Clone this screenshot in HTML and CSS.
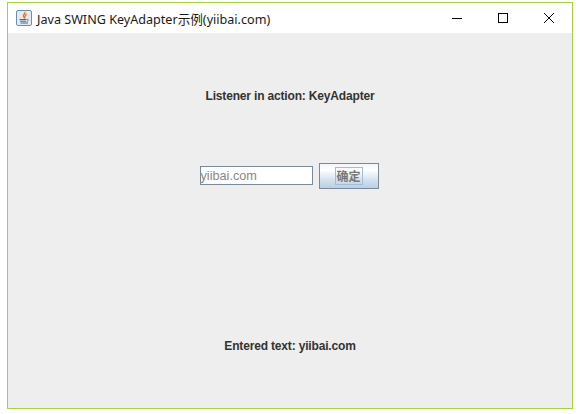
FILE: index.html
```html
<!DOCTYPE html>
<html>
  <head>
    <title>Java SWING KeyAdapter示例(yiibai.com)</title>
    <link rel="stylesheet" href="styles.css">
  </head>
  <body>
    <div class="window">
      <div class="titlebar">
        <svg class="app-icon" width="16" height="16" viewBox="0 0 16 16">
          <rect x="0.5" y="0.5" width="15" height="15" rx="1.5" fill="#e3eaf2" stroke="#6f8daa"/>
          <path d="M8.8 2c1 1.7-2 2.6-1.4 4.4.2.6.6 1 1 1.4-.3-1.3 2.4-2.1 1.5-3.9" fill="none" stroke="#e8701a" stroke-width="1.3"/>
          <path d="M3.5 9.5h7M4 11.2h6M4.5 13h7.5" stroke="#48698c" stroke-width="1"/>
          <path d="M11 9.3c1.8-.3 2 1.7-.4 2.1" fill="none" stroke="#48698c" stroke-width="0.8"/>
        </svg>
        <span class="title">Java SWING KeyAdapter示例(yiibai.com)</span>
        <div class="controls">
          <svg class="ctl" width="46" height="30" viewBox="0 0 46 30"><path d="M18 15.5h10" stroke="#000"/></svg>
          <svg class="ctl" width="46" height="30" viewBox="0 0 46 30"><rect x="18.5" y="10.5" width="9" height="9" fill="none" stroke="#000"/></svg>
          <svg class="ctl" width="46" height="30" viewBox="0 0 46 30"><path d="M18 10l10 10M28 10l-10 10" stroke="#000"/></svg>
        </div>
      </div>
      <div class="content">
        <div class="label top-label">Listener in action: KeyAdapter</div>
        <div class="form-row">
          <input class="field" type="text" value="yiibai.com">
          <button class="btn"><span class="btn-text">确定</span></button>
        </div>
        <div class="label bottom-label">Entered text: yiibai.com</div>
      </div>
    </div>
  </body>
</html>
```

FILE: styles.css
```css
html, body {
  margin: 0;
  padding: 0;
  background: #fff;
  height: 100%;
  overflow: hidden;
}
.window {
  box-sizing: border-box;
  width: 566px;
  height: 407px;
  margin: 2px 0 0 7px;
  border: 1px solid #a8d13f;
  display: flex;
  flex-direction: column;
  font-family: "Noto Sans", "Noto Sans CJK SC", sans-serif;
}
.titlebar {
  height: 30px;
  flex: none;
  background: #fff;
  display: flex;
  align-items: center;
  padding-left: 8px;
}
.app-icon {
  flex: none;
}
.title {
  margin-left: 5px;
  font-size: 12.6px;
  color: #1a1a1a;
  white-space: nowrap;
}
.controls {
  margin-left: auto;
  display: flex;
}
.ctl {
  display: block;
}
.content {
  flex: 1;
  background: #eeeeee;
  display: flex;
  flex-direction: column;
  align-items: center;
  font-family: "Liberation Sans", sans-serif;
}
.label {
  font-size: 12px;
  font-weight: bold;
  letter-spacing: -0.17px;
  line-height: 14px;
  color: #333;
}
.top-label {
  margin-top: 56px;
}
.form-row {
  display: flex;
  align-items: flex-start;
  gap: 6px;
  margin-top: 60px;
  margin-right: 2px;
}
.field {
  box-sizing: border-box;
  width: 113px;
  height: 19px;
  margin-top: 3px;
  padding: 0;
  border: 1px solid #7a8a99;
  background: #fff;
  font-family: "Liberation Sans", sans-serif;
  font-size: 12.7px;
  color: #888;
  outline: none;
}
.btn {
  box-sizing: border-box;
  width: 60px;
  height: 26px;
  padding: 0;
  border: 1px solid #7a8a99;
  background: linear-gradient(#f2f6fa, #ffffff 25%, #d6e2ef 65%, #b8cfe5);
  display: flex;
  align-items: center;
  justify-content: center;
}
.btn-text {
  box-sizing: border-box;
  width: 28px;
  height: 18px;
  border: 1px solid #a3bdd6;
  font-family: "Noto Sans CJK SC", sans-serif;
  font-size: 12px;
  font-weight: bold;
  line-height: 16px;
  color: #777;
  text-align: center;
}
.bottom-label {
  margin-top: 150px;
}
```
